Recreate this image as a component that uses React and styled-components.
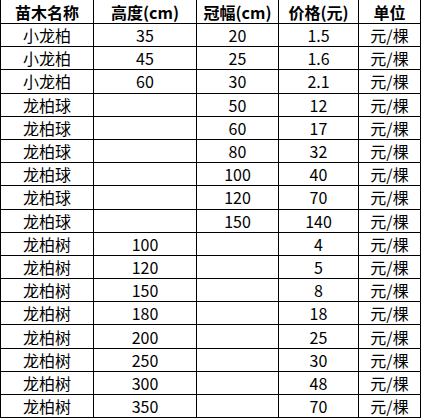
import React from "react";
import styled, { createGlobalStyle } from "styled-components";

const GlobalStyle = createGlobalStyle`
  html, body {
    margin: 0;
    padding: 0;
    background: #ffffff;
  }
`;

const Sheet = styled.table`
  border-collapse: collapse;
  table-layout: fixed;
  width: 421px;
  font-family: "Noto Sans CJK SC", "Noto Sans", sans-serif;
  color: #000000;
`;

const HeadCell = styled.th`
  height: 23px;
  padding: 0;
  border: 1px solid #000000;
  border-top: none;
  font-size: 16px;
  font-weight: 700;
  line-height: 20px;
  text-align: center;
  vertical-align: middle;
`;

const Cell = styled.td`
  height: 22.2px;
  padding: 0;
  border: 1px solid #000000;
  font-size: 16px;
  font-weight: 400;
  line-height: 20px;
  text-align: center;
  vertical-align: middle;
  white-space: nowrap;
`;

const columns = [
  { title: "苗木名称", width: 93 },
  { title: "高度(cm)", width: 103 },
  { title: "冠幅(cm)", width: 82 },
  { title: "价格(元)", width: 80 },
  { title: "单位", width: 62 },
];

const rows = [
  ["小龙柏", "35", "20", "1.5"],
  ["小龙柏", "45", "25", "1.6"],
  ["小龙柏", "60", "30", "2.1"],
  ["龙柏球", "", "50", "12"],
  ["龙柏球", "", "60", "17"],
  ["龙柏球", "", "80", "32"],
  ["龙柏球", "", "100", "40"],
  ["龙柏球", "", "120", "70"],
  ["龙柏球", "", "150", "140"],
  ["龙柏树", "100", "", "4"],
  ["龙柏树", "120", "", "5"],
  ["龙柏树", "150", "", "8"],
  ["龙柏树", "180", "", "18"],
  ["龙柏树", "200", "", "25"],
  ["龙柏树", "250", "", "30"],
  ["龙柏树", "300", "", "48"],
  ["龙柏树", "350", "", "70"],
];

export default function App() {
  return (
    <>
      <GlobalStyle />
      <Sheet>
        <colgroup>
          {columns.map((c) => (
            <col key={c.title} style={{ width: c.width }} />
          ))}
        </colgroup>
        <thead>
          <tr>
            {columns.map((c) => (
              <HeadCell key={c.title}>{c.title}</HeadCell>
            ))}
          </tr>
        </thead>
        <tbody>
          {rows.map((r, i) => (
            <tr key={i}>
              {r.map((v, j) => (
                <Cell key={j}>{v}</Cell>
              ))}
              <Cell>元/棵</Cell>
            </tr>
          ))}
        </tbody>
      </Sheet>
    </>
  );
}
